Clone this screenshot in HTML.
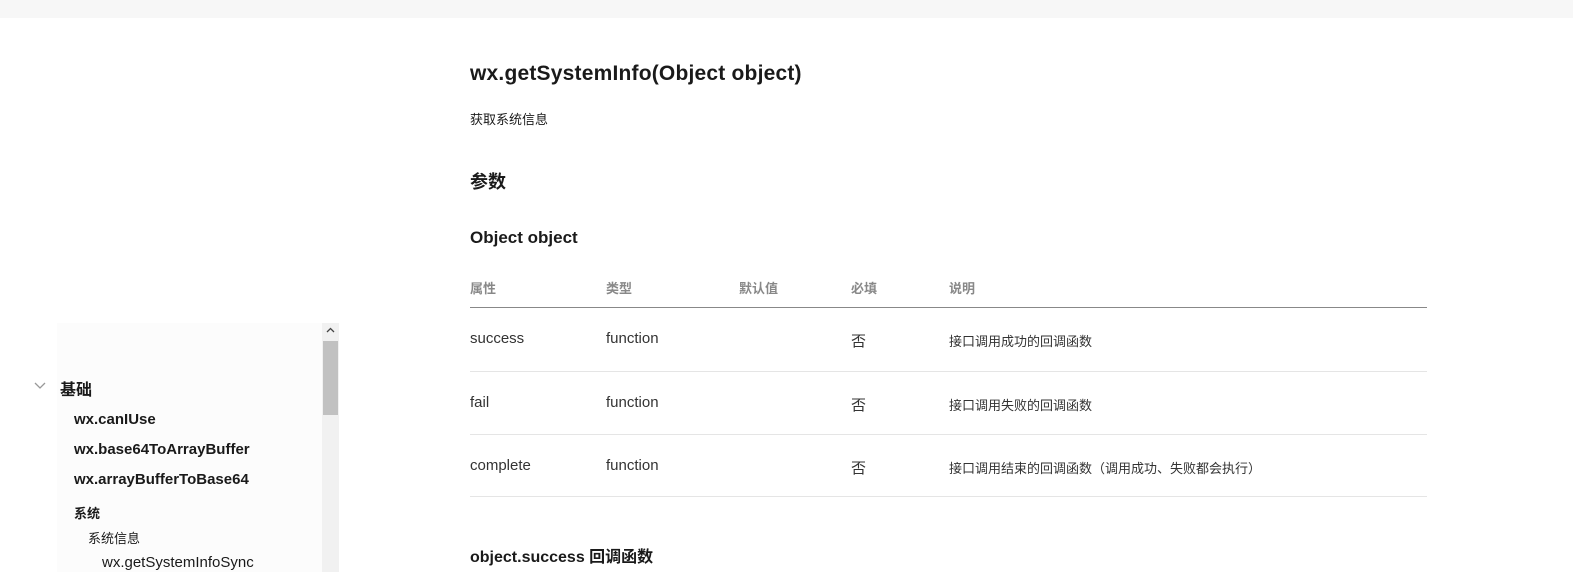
<!DOCTYPE html>
<html><head><meta charset="utf-8"><style>
*{margin:0;padding:0;box-sizing:border-box}
body{width:1573px;height:572px;overflow:hidden;background:#fff;font-family:"Liberation Sans","Noto Sans CJK SC",sans-serif;color:#1a1a1a;position:relative}
.a{position:absolute;white-space:nowrap}
.top{left:0;top:0;width:1573px;height:18px;background:#f7f7f7}
.side{left:57px;top:323px;width:265px;height:249px;background:#fcfcfc}
.track{left:322px;top:323px;width:17px;height:249px;background:#f1f1f1}
.thumb{left:323px;top:341px;width:15px;height:74px;background:#c1c1c1}
.b{font-weight:bold}
.th{color:#888;font-size:13px;font-weight:bold}
.td{font-size:15px;color:#333}
.line{left:470px;width:957px;height:1px;background:#e5e5e5}
</style></head><body>
<div class="a top"></div>
<div class="a side"></div>
<div class="a track"></div>
<div class="a thumb"></div>
<svg class="a" style="left:326px;top:327px" width="9" height="7"><path d="M1 5 L4.5 1.5 L8 5" stroke="#444" stroke-width="1.3" fill="none"/></svg>
<svg class="a" style="left:34px;top:381px" width="12" height="10"><path d="M1 2 L6 7 L11 2" stroke="#999" stroke-width="1.3" fill="none"/></svg>
<div class="a b" style="left:60px;top:376px;font-size:16px">基础</div>
<div class="a b" style="left:74px;top:411px;font-size:15px">wx.canIUse</div>
<div class="a b" style="left:74px;top:441px;font-size:15px">wx.base64ToArrayBuffer</div>
<div class="a b" style="left:74px;top:471px;font-size:15px">wx.arrayBufferToBase64</div>
<div class="a b" style="left:74px;top:503px;font-size:13px">系统</div>
<div class="a" style="left:88px;top:528px;font-size:13px">系统信息</div>
<div class="a" style="left:102px;top:554px;font-size:15px">wx.getSystemInfoSync</div>

<div class="a b" style="left:470px;top:62px;font-size:21px;letter-spacing:0.2px">wx.getSystemInfo(Object object)</div>
<div class="a" style="left:470px;top:109px;font-size:13px">获取系统信息</div>
<div class="a b" style="left:470px;top:168px;font-size:18px">参数</div>
<div class="a b" style="left:470px;top:228px;font-size:17px">Object object</div>
<div class="a th" style="left:470px;top:278px">属性</div>
<div class="a th" style="left:606px;top:278px">类型</div>
<div class="a th" style="left:739px;top:278px">默认值</div>
<div class="a th" style="left:851px;top:278px">必填</div>
<div class="a th" style="left:949px;top:278px">说明</div>
<div class="a line" style="top:307px;background:#888"></div>
<div class="a td" style="left:470px;top:330px">success</div>
<div class="a td" style="left:606px;top:330px">function</div>
<div class="a td" style="left:851px;top:330px">否</div>
<div class="a td" style="left:949px;top:331px;font-size:13px">接口调用成功的回调函数</div>
<div class="a line" style="top:371px"></div>
<div class="a td" style="left:470px;top:394px">fail</div>
<div class="a td" style="left:606px;top:394px">function</div>
<div class="a td" style="left:851px;top:394px">否</div>
<div class="a td" style="left:949px;top:395px;font-size:13px">接口调用失败的回调函数</div>
<div class="a line" style="top:434px"></div>
<div class="a td" style="left:470px;top:457px">complete</div>
<div class="a td" style="left:606px;top:457px">function</div>
<div class="a td" style="left:851px;top:457px">否</div>
<div class="a td" style="left:949px;top:458px;font-size:13px">接口调用结束的回调函数（调用成功、失败都会执行）</div>
<div class="a line" style="top:496px"></div>
<div class="a b" style="left:470px;top:543px;font-size:16px">object.success 回调函数</div>
</body></html>
